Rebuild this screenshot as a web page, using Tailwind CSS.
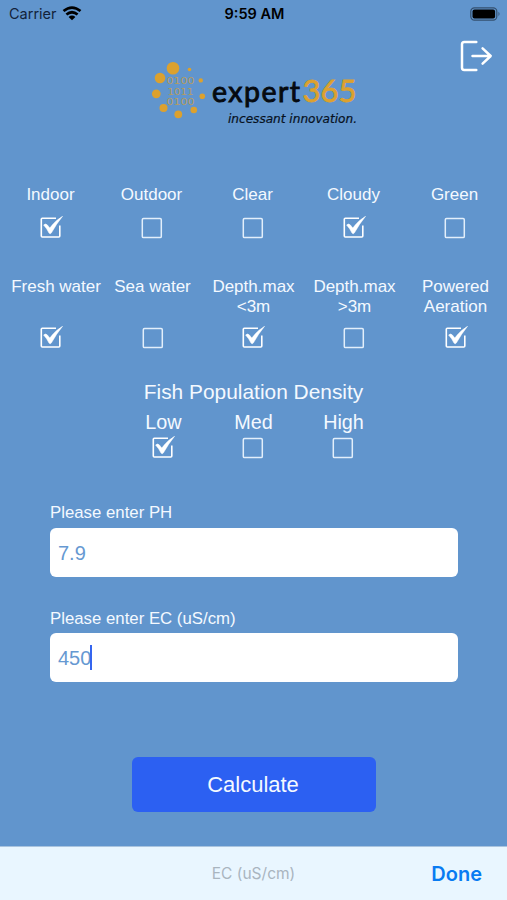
<!DOCTYPE html>
<html lang="en">
<head>
<meta charset="utf-8">
<meta name="viewport" content="width=device-width">
<title>expert365</title>
<script src="https://cdn.jsdelivr.net/npm/@tailwindcss/browser@4"></script>
</head>
<body class="w-[507px] h-[900px] overflow-hidden bg-[#6195cd] font-['Liberation_Sans',Arial,sans-serif] text-[#f4f9ff]">
<svg class="hidden">
  <symbol id="off" viewBox="0 0 24 24"><rect x="2.300" y="2.600" width="19" height="19" rx="1.200" fill="none" stroke="#e3effb" stroke-width="1.500"/></symbol>
  <symbol id="on" viewBox="0 0 24 24"><path d="M17 2.300H3.300Q2.300 2.300 2.300 3.300V20Q2.300 21 3.300 21H19.800Q20.800 21 20.800 20V9.500" fill="none" stroke="#fff" stroke-width="1.600"/><path d="M4.600 9Q6.600 7 8.400 9L10.800 12Q15.800 4.800 23.600 .2Q17.300 8 12.300 17Q11.200 18.500 10 17Q7.900 12.500 4.600 9Z" fill="#fff" stroke="#fff" stroke-width=".5"/></symbol>
</svg>
<main class="flex h-full flex-col">
  <header class="flex h-7 shrink-0 items-center justify-between pl-[9px] pr-[6px] text-black font-[Inter,sans-serif]">
    <div class="flex w-[180px] items-center gap-[5px] text-[14.500px] leading-7 text-[#13233a]"><span>Carrier</span>
      <svg width="20" height="16" viewBox="0 0 20 16" fill="none" stroke="#000" stroke-width="2.700"><path d="M1.500 5Q10-1.900 18.500 5M4.400 8.500Q10 4 15.600 8.500"/><path d="M6.600 10.900Q10 8.100 13.400 10.900L10 14.300Z" fill="#000" stroke="none"/></svg>
    </div>
    <div class="pr-px text-[14.500px] font-semibold">9:59 AM</div>
    <div class="flex w-[180px] justify-end"><svg class="-mt-px" width="31" height="14" viewBox="0 0 31 14"><rect x=".8" y=".8" width="26" height="12.400" rx="3.600" fill="none" stroke="#34506f" stroke-width="1.200"/><rect x="2.500" y="2.500" width="22.600" height="9" rx="2" fill="#000"/><path d="M28.500 4.800Q30.500 7 28.500 9.200Z" fill="#34506f"/></svg></div>
  </header>
  <div class="flex h-[150px] shrink-0 justify-between pl-[145px] pr-[14px]">
    <svg class="mt-[27px]" width="225" height="80" viewBox="145 55 225 80" fill="#dca12e">
      <circle cx="173" cy="68.300" r="6.300"/><circle cx="160" cy="78" r="5.300"/><circle cx="156.300" cy="93.800" r="4.400"/><circle cx="163.500" cy="108" r="4"/><circle cx="178.300" cy="114.300" r="3.900"/><circle cx="193.800" cy="110" r="3.300"/><circle cx="202.300" cy="96.300" r="2.800"/><circle cx="200.800" cy="80.400" r="2.200"/><circle cx="189.500" cy="69.500" r="1.800"/>
      <g font-family="DejaVu Sans" font-size="8" fill="#b59c60"><text x="166.500" y="84" textLength="28" lengthAdjust="spacingAndGlyphs">0100</text><text x="167.500" y="94.500" textLength="26" lengthAdjust="spacingAndGlyphs">1011</text><text x="166.500" y="104.800" textLength="28" lengthAdjust="spacingAndGlyphs">0100</text></g>
      <text x="212" y="101.800" font-family="Lato" font-size="28.500" textLength="88" lengthAdjust="spacing" fill="#050a10" stroke="#050a10" stroke-width=".9">expert</text>
      <text x="302.500" y="101.800" font-family="Lato" font-size="31.500" textLength="54" lengthAdjust="spacingAndGlyphs" stroke="#dca12e" stroke-width=".8">365</text>
      <text x="228" y="123" font-family="DejaVu Sans" font-style="oblique" font-size="12" textLength="129" lengthAdjust="spacingAndGlyphs" fill="#07111d" stroke="#07111d" stroke-width=".2">incessant innovation.</text>
    </svg>
    <svg class="mt-[11px]" width="34" height="34" viewBox="0 0 34 34" fill="none" stroke="#fff" stroke-width="2.500" stroke-linecap="round" stroke-linejoin="round"><path d="M17.300 3H5.200Q3 3 3 5.200V28.800Q3 31 5.200 31H17.300M13.500 17H31.500M23.600 9.300L31.700 17L23.600 24.700"/></svg>
  </div>
  <section class="grid h-[98px] w-[505px] shrink-0 grid-cols-5 pt-[6px] text-center text-[17px] leading-[22px]">
    <div class="flex flex-col items-center gap-[10px]"><span>Indoor</span><svg class="size-6 shrink-0"><use href="#on"/></svg></div>
    <div class="flex flex-col items-center gap-[10px]"><span>Outdoor</span><svg class="size-6 shrink-0"><use href="#off"/></svg></div>
    <div class="flex flex-col items-center gap-[10px]"><span>Clear</span><svg class="size-6 shrink-0"><use href="#off"/></svg></div>
    <div class="flex flex-col items-center gap-[10px]"><span>Cloudy</span><svg class="size-6 shrink-0"><use href="#on"/></svg></div>
    <div class="flex flex-col items-center gap-[10px]"><span>Green</span><svg class="size-6 shrink-0"><use href="#off"/></svg></div>
  </section>
  <section class="grid h-[103px] w-[505px] shrink-0 grid-cols-5 pt-px text-center text-[17px] leading-5 ml-[1px]">
    <div class="flex flex-col items-center gap-[9px]"><span class="h-10 whitespace-nowrap pl-[9px]">Fresh water</span><svg class="mr-[2px] size-6 shrink-0"><use href="#on"/></svg></div>
    <div class="flex flex-col items-center gap-[9px]"><span class="h-10 whitespace-nowrap">Sea water</span><svg class="size-6 shrink-0"><use href="#off"/></svg></div>
    <div class="flex flex-col items-center gap-[9px]"><span class="h-10">Depth.max<br>&lt;3m</span><svg class="mr-px size-6 shrink-0"><use href="#on"/></svg></div>
    <div class="flex flex-col items-center gap-[9px]"><span class="h-10">Depth.max<br>&gt;3m</span><svg class="mr-px size-6 shrink-0"><use href="#off"/></svg></div>
    <div class="flex flex-col items-center gap-[9px]"><span class="h-10">Powered<br>Aeration</span><svg class="size-6 shrink-0"><use href="#on"/></svg></div>
  </section>
  <section class="flex h-[124px] shrink-0 flex-col items-center">
    <h2 class="text-[20.900px] leading-[26px]">Fish Population Density</h2>
    <div class="mt-[6px] grid w-[270px] grid-cols-3 text-[19.800px] leading-[22px]">
      <div class="flex flex-col items-center gap-[3px]"><span>Low</span><svg class="mr-px size-6 shrink-0"><use href="#on"/></svg></div>
      <div class="flex flex-col items-center gap-[3px]"><span>Med</span><svg class="mr-px size-6 shrink-0"><use href="#off"/></svg></div>
      <div class="flex flex-col items-center gap-[3px]"><span>High</span><svg class="mr-[2px] size-6 shrink-0"><use href="#off"/></svg></div>
    </div>
  </section>
  <section class="flex flex-col pr-[49px] pl-[50px]">
    <label class="text-[16.800px] leading-5">Please enter PH</label>
    <div class="mt-[5px] flex h-[49px] items-center rounded-[6px] bg-white pl-2 text-[20px] text-[#6699d2]">7.9</div>
    <label class="mt-[32px] text-[16.800px] leading-5">Please enter EC (uS/cm)</label>
    <div class="mt-[4px] flex h-[49px] items-center rounded-[6px] bg-white pl-2 text-[20px] text-[#6699d2]">450<span class="-ml-[1px] h-[25px] w-[2px] bg-[#3565ef]"></span></div>
  </section>
  <button class="mt-[75px] ml-[132px] h-[55px] w-[244px] shrink-0 rounded-[6px] bg-[#2c60f2] pr-[2px] text-[22px]">Calculate</button>
  <footer class="mt-auto grid h-[54px] shrink-0 grid-cols-3 items-center border-t border-[#a9c4df] bg-[#e9f6ff] font-[Inter,sans-serif]">
    <span></span><span class="text-center text-[15.500px] text-[#a9b5bf]">EC (uS/cm)</span><span class="pr-[25px] text-right text-[20px] font-semibold text-[#087bf2]">Done</span>
  </footer>
</main>
</body>
</html>
